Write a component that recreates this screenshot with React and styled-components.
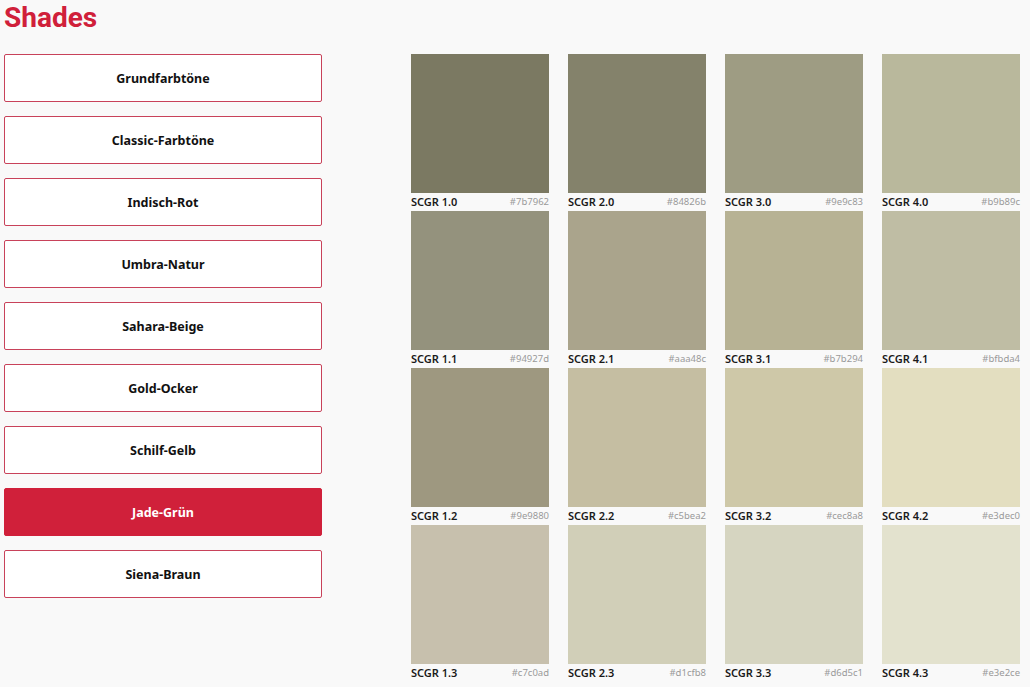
import { useState } from 'react'
import styled, { createGlobalStyle } from 'styled-components'

const GROUPS = [
  'Grundfarbtöne',
  'Classic-Farbtöne',
  'Indisch-Rot',
  'Umbra-Natur',
  'Sahara-Beige',
  'Gold-Ocker',
  'Schilf-Gelb',
  'Jade-Grün',
  'Siena-Braun',
]

// row by row, as on the page
const SHADES = [
  { name: 'SCGR 1.0', hex: '#7b7962' },
  { name: 'SCGR 2.0', hex: '#84826b' },
  { name: 'SCGR 3.0', hex: '#9e9c83' },
  { name: 'SCGR 4.0', hex: '#b9b89c' },
  { name: 'SCGR 1.1', hex: '#94927d' },
  { name: 'SCGR 2.1', hex: '#aaa48c' },
  { name: 'SCGR 3.1', hex: '#b7b294' },
  { name: 'SCGR 4.1', hex: '#bfbda4' },
  { name: 'SCGR 1.2', hex: '#9e9880' },
  { name: 'SCGR 2.2', hex: '#c5bea2' },
  { name: 'SCGR 3.2', hex: '#cec8a8' },
  { name: 'SCGR 4.2', hex: '#e3dec0' },
  { name: 'SCGR 1.3', hex: '#c7c0ad' },
  { name: 'SCGR 2.3', hex: '#d1cfb8' },
  { name: 'SCGR 3.3', hex: '#d6d5c1' },
  { name: 'SCGR 4.3', hex: '#e3e2ce' },
]

const RED = '#d0203a'

const GlobalStyle = createGlobalStyle`
  html, body {
    margin: 0;
    background: #f9f9f9;
  }
  body {
    font-family: 'Noto Sans', 'Open Sans', sans-serif;
    color: #1a1a1a;
  }
`

const Page = styled.div`
  padding: 3px 4px 0 4px;
`

const Title = styled.h1`
  margin: 0;
  font: 700 28px/30px Roboto, 'Liberation Sans', sans-serif;
  color: ${RED};
`

const Body = styled.div`
  display: flex;
  gap: 89px;
  margin-top: 21px;
`

const Menu = styled.div`
  width: 318px;
  flex: none;
  display: flex;
  flex-direction: column;
  gap: 14px;
`

const GroupButton = styled.button`
  height: 48px;
  border: 1px solid ${p => (p.$active ? RED : '#c8425a')};
  border-radius: 2px;
  background: ${p => (p.$active ? RED : '#fff')};
  color: ${p => (p.$active ? '#fff' : '#111')};
  font: 700 12.5px 'Noto Sans', 'Open Sans', sans-serif;
  cursor: pointer;
  padding: 0;
`

const Grid = styled.div`
  display: grid;
  grid-template-columns: repeat(4, 138px);
  column-gap: 19px;
  row-gap: 0;
`

const Tile = styled.div`
  display: flex;
  flex-direction: column;
  height: 157px;
`

const Swatch = styled.div`
  height: 139px;
  background: ${p => p.$color};
`

const Label = styled.div`
  display: flex;
  justify-content: space-between;
  align-items: center;
  height: 17px;
`

const Name = styled.span`
  font: 600 11px 'Noto Sans', 'Open Sans', sans-serif;
  color: #1a1a1a;
`

const Hex = styled.span`
  font: 400 9.5px 'Noto Sans', 'Open Sans', sans-serif;
  color: #9a9a9a;
`

const App = () => {
  const [active, setActive] = useState('Jade-Grün')

  return (
    <Page>
      <GlobalStyle />
      <Title>Shades</Title>
      <Body>
        <Menu>
          {GROUPS.map(g => (
            <GroupButton key={g} $active={g === active} onClick={() => setActive(g)}>
              {g}
            </GroupButton>
          ))}
        </Menu>
        <Grid>
          {SHADES.map(s => (
            <Tile key={s.name}>
              <Swatch $color={s.hex} />
              <Label>
                <Name>{s.name}</Name>
                <Hex>{s.hex}</Hex>
              </Label>
            </Tile>
          ))}
        </Grid>
      </Body>
    </Page>
  )
}

export default App
